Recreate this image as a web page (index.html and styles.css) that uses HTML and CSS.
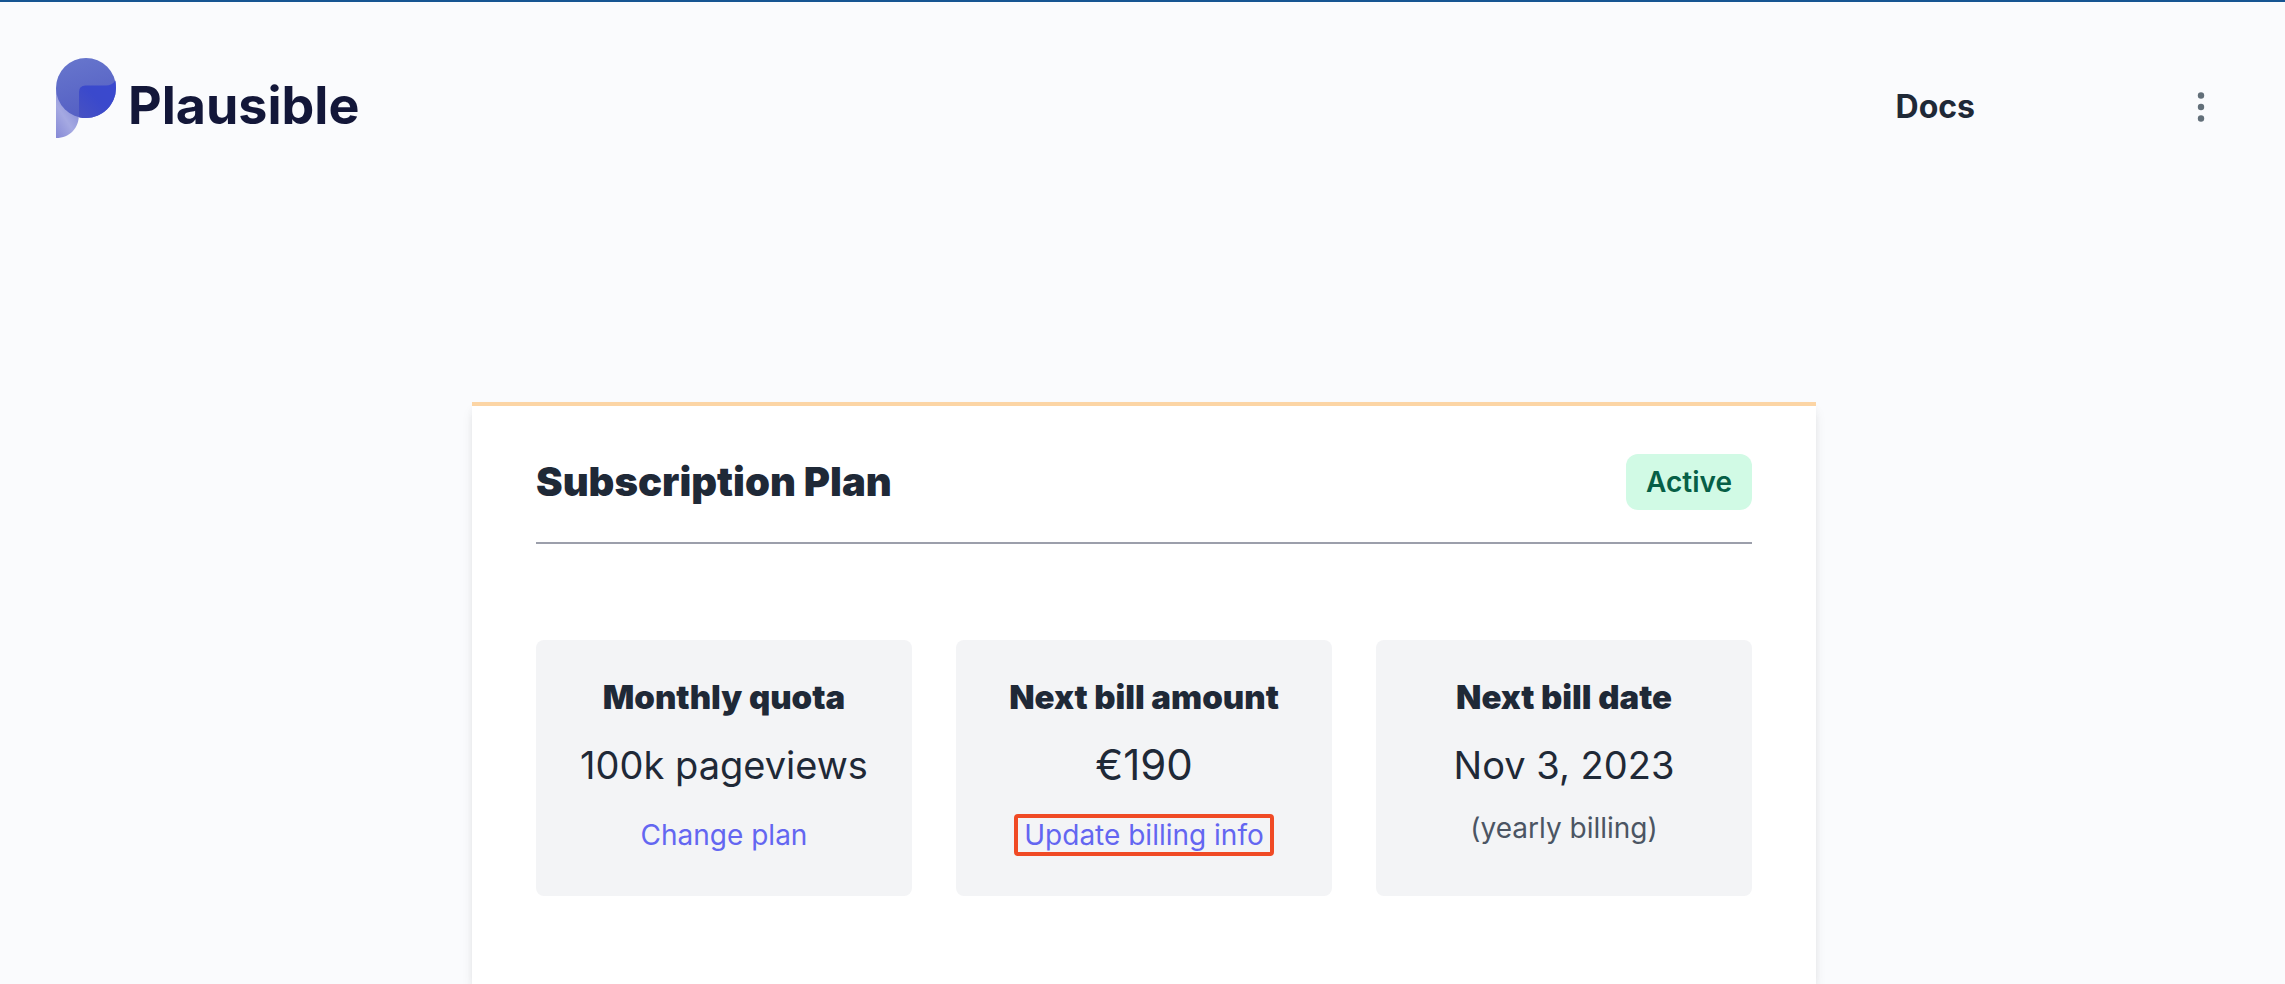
FILE: index.html
```html
<!DOCTYPE html>
<html lang="en">
<head>
<meta charset="utf-8">
<title>Plausible</title>
<link rel="stylesheet" href="styles.css">
</head>
<body>
<header class="header">
  <a class="brand" href="#">
    <svg class="brand-mark" viewBox="0 0 60 80" aria-hidden="true">
      <defs>
        <linearGradient id="tail" x1="0" y1="1" x2="0.7" y2="0">
          <stop offset="0" stop-color="#8589d6"/>
          <stop offset="0.45" stop-color="#a5a9e2"/>
          <stop offset="1" stop-color="#7e86d4"/>
        </linearGradient>
        <linearGradient id="disc" x1="0" y1="0" x2="0.3" y2="1">
          <stop offset="0" stop-color="#6877cd"/>
          <stop offset="1" stop-color="#5560c4"/>
        </linearGradient>
        <linearGradient id="corner" x1="0" y1="1" x2="1" y2="0">
          <stop offset="0" stop-color="#4852c2"/>
          <stop offset="0.5" stop-color="#3a49cc"/>
          <stop offset="1" stop-color="#3a49cf"/>
        </linearGradient>
      </defs>
      <path d="M0 30H23V56C23 70 14 80 0 80Z" fill="url(#tail)"/>
      <circle cx="30" cy="30" r="30" fill="url(#disc)"/>
      <path d="M23 59.2V34Q23 27.500 29.500 27.500H50Q56 27.500 59.400 22.500Q60 26 60 30A30 30 0 0 1 23 59.200Z" fill="url(#corner)"/>
    </svg>
    <span class="brand-name">Plausible</span>
  </a>
  <nav class="nav">
    <a class="nav-link" href="#">Docs</a>
    <button class="menu" type="button" aria-label="Menu">
      <svg class="menu-icon" viewBox="0 0 8 32" aria-hidden="true">
        <circle cx="4" cy="4.500" r="3.200"/><circle cx="4" cy="16" r="3.200"/><circle cx="4" cy="27.500" r="3.200"/>
      </svg>
    </button>
  </nav>
</header>
<main class="card">
  <div class="card-head">
    <h1 class="card-title">Subscription Plan</h1>
    <span class="badge">Active</span>
  </div>
  <div class="stats">
    <section class="stat">
      <h2 class="stat-title">Monthly quota</h2>
      <p class="stat-value">100k pageviews</p>
      <a class="stat-link" href="#">Change plan</a>
    </section>
    <section class="stat">
      <h2 class="stat-title">Next bill amount</h2>
      <p class="stat-value stat-value-price">€190</p>
      <a class="stat-link stat-link-marked" href="#">Update billing info</a>
    </section>
    <section class="stat">
      <h2 class="stat-title">Next bill date</h2>
      <p class="stat-value">Nov 3, 2023</p>
      <p class="stat-note">(yearly billing)</p>
    </section>
  </div>
</main>
</body>
</html>
```
FILE: styles.css
```css
* { box-sizing: border-box; margin: 0; }
body {
  min-height: 100vh;
  display: flex;
  flex-direction: column;
  padding-left: 3px;
  border-top: 2px solid #165592;
  background: #fafbfd;
  color: #1f2937;
  font-family: Inter, "Liberation Sans", sans-serif;
}
a { text-decoration: none; }
.header {
  display: flex;
  justify-content: space-between;
  align-items: center;
  padding: 56px 60px 0 53px;
}
.brand { display: flex; align-items: flex-end; gap: 12px; color: #131739; }
.brand-mark { width: 60px; height: 80px; }
.brand-name { font-size: 52px; font-weight: 700; line-height: 64px; }
.nav { display: flex; align-items: center; gap: 202px; padding-top: 18px; }
.nav-link { color: #1f2937; font-size: 32px; font-weight: 700; line-height: 40px; }
.menu {
  display: flex;
  justify-content: center;
  width: 48px;
  padding: 0;
  border: 0;
  background: none;
}
.menu-icon { width: 8px; height: 32px; fill: #626f79; }
.card {
  flex: 1;
  width: 1344px;
  max-width: 100%;
  margin: 264px auto 0;
  padding: 48px 64px 88px;
  border-top: 4px solid #fcd5a5;
  background: #fff;
  box-shadow: 0 8px 12px -2px rgba(0, 0, 0, 0.1), 0 4px 8px -2px rgba(0, 0, 0, 0.06);
}
.card-head {
  display: flex;
  justify-content: space-between;
  align-items: center;
  padding-bottom: 32px;
  border-bottom: 2px solid #9c9fab;
}
.card-title { font-size: 40px; font-weight: 900; line-height: 56px; }
.badge {
  padding: 8px 20px;
  border-radius: 12px;
  background: #d1fae5;
  color: #065f46;
  font-size: 28px;
  font-weight: 600;
  line-height: 40px;
}
.stats {
  display: grid;
  grid-template-columns: repeat(3, 1fr);
  gap: 44px;
  margin-top: 96px;
}
.stat {
  display: flex;
  flex-direction: column;
  align-items: center;
  padding: 32px 0 40px;
  border-radius: 8px;
  background: #f3f4f6;
}
.stat-title { font-size: 33px; font-weight: 900; line-height: 50px; }
.stat-value { margin-top: 16px; font-size: 38px; line-height: 54px; }
.stat-value-price { font-size: 42px; }
.stat-link {
  margin-top: 22px;
  padding: 0 6px;
  border: 4px solid transparent;
  border-radius: 4px;
  color: #6366f1;
  font-size: 28px;
  line-height: 34px;
}
.stat-link-marked { border-color: #f04a25; }
.stat-note { margin-top: 16px; color: #4b5563; font-size: 28px; line-height: 40px; }
```
